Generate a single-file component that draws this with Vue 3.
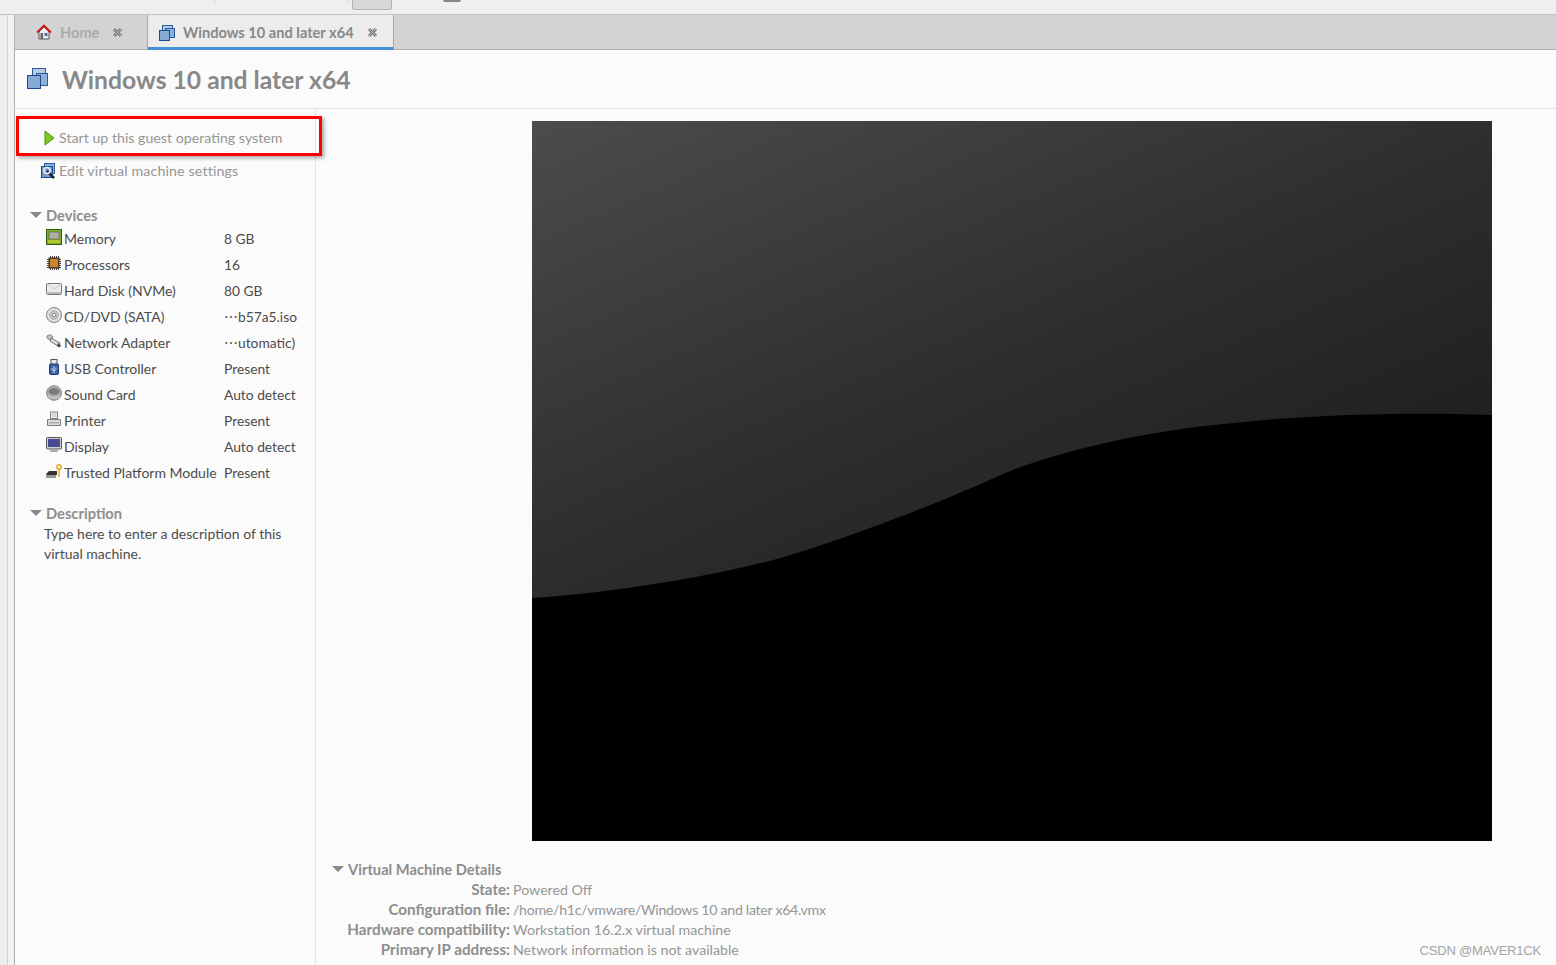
<script setup>
const devices = [
  { icon: 'memory', name: 'Memory', value: '8 GB' },
  { icon: 'cpu', name: 'Processors', value: '16' },
  { icon: 'disk', name: 'Hard Disk (NVMe)', value: '80 GB' },
  { icon: 'cd', name: 'CD/DVD (SATA)', value: '⋯b57a5.iso' },
  { icon: 'net', name: 'Network Adapter', value: '⋯utomatic)' },
  { icon: 'usb', name: 'USB Controller', value: 'Present' },
  { icon: 'sound', name: 'Sound Card', value: 'Auto detect' },
  { icon: 'printer', name: 'Printer', value: 'Present' },
  { icon: 'display', name: 'Display', value: 'Auto detect' },
  { icon: 'tpm', name: 'Trusted Platform Module', value: 'Present' }
]

const details = [
  { label: 'State:', value: 'Powered Off' },
  { label: 'Configuration file:', value: '/home/h1c/vmware/Windows 10 and later x64.vmx', tight: true },
  { label: 'Hardware compatibility:', value: 'Workstation 16.2.x virtual machine' },
  { label: 'Primary IP address:', value: 'Network information is not available' }
]
</script>

<template>
  <div class="page">
    <div class="topbar">
      <i class="tick first"></i>
      <i class="tick second"></i>
      <span class="topbtn"></span>
      <i class="topmark"></i>
    </div>
    <div class="main">
      <div class="rail"></div>
      <div class="workspace">
        <div class="tabs">
          <div class="tab home">
            <svg class="tabicon" viewBox="0 0 16 16">
              <path d="M3 8v7h10V8L8 3z" fill="#ececec" stroke="#555" stroke-width="1" />
              <rect x="4.500" y="9" width="2.500" height="6" fill="#666" />
              <rect x="8.500" y="9" width="3" height="3" fill="#5a70a0" />
              <path d="M1 8.500L8 1.500l7 7" fill="none" stroke="#d01818" stroke-width="1.800" />
            </svg>
            <span class="tabtext">Home</span>
            <svg class="close" viewBox="0 0 11 11">
              <path d="M2 2l7 7M9 2l-7 7" stroke="#777" stroke-width="3" />
              <path d="M2 2l7 7M9 2l-7 7" stroke="#bbb" stroke-width="1" />
            </svg>
          </div>
          <div class="tab active">
            <svg class="tabicon" viewBox="0 0 16 16">
              <rect x="3.500" y="0.500" width="10" height="10" fill="#b4cbe8" stroke="#2c5a9c" />
              <rect x="6.500" y="3.500" width="9" height="9" fill="#8db0dc" stroke="#2c5a9c" />
              <rect x="0.500" y="5.500" width="10" height="10" fill="#86a9d6" stroke="#1f4a8c" />
            </svg>
            <span class="tabtext">Windows 10 and later x64</span>
            <svg class="close" viewBox="0 0 11 11">
              <path d="M2 2l7 7M9 2l-7 7" stroke="#777" stroke-width="3" />
              <path d="M2 2l7 7M9 2l-7 7" stroke="#bbb" stroke-width="1" />
            </svg>
          </div>
        </div>

        <header class="title">
          <svg class="titleicon" viewBox="0 0 22 22">
            <rect x="5.500" y="0.500" width="13" height="13" fill="#b4cbe8" stroke="#2c5a9c" />
            <rect x="9.500" y="5.500" width="11" height="12" fill="#8db0dc" stroke="#2c5a9c" />
            <rect x="0.500" y="7.500" width="13" height="13" fill="#86a9d6" stroke="#1f4a8c" />
          </svg>
          <h1>Windows 10 and later x64</h1>
        </header>

        <div class="body">
          <aside class="sidebar">
            <div class="action start">
              <svg class="play" viewBox="0 0 11 16">
                <path d="M1 1l9 7-9 7z" fill="#7ccb20" stroke="#4b8f12" stroke-width="1" />
              </svg>
              <span>Start up this guest operating system</span>
            </div>
            <div class="highlight"></div>
            <div class="action edit">
              <svg class="editicon" viewBox="0 0 16 16">
                <rect x="3.500" y="0.500" width="10" height="10" fill="#8db0dc" stroke="#2c5a9c" />
                <rect x="0.500" y="3.500" width="11" height="11" fill="#6f9ad0" stroke="#1f4a8c" />
                <path d="M6 8l7 7" stroke="#222" stroke-width="2.500" />
                <circle cx="6" cy="7.500" r="3" fill="none" stroke="#eee" stroke-width="1.600" />
              </svg>
              <span>Edit virtual machine settings</span>
            </div>

            <div class="section devices">
              <i class="caret"></i>Devices
            </div>
            <ul class="devlist">
              <li v-for="d in devices" :key="d.name">
                <svg class="devicon" viewBox="0 0 16 16">
                  <template v-if="d.icon === 'memory'">
                    <rect x="0.500" y="0.500" width="15" height="15" fill="#7fb02a" stroke="#2f5c0e" />
                    <rect x="3" y="3" width="10" height="7" fill="#b0b0a4" stroke="#555" stroke-width="0.600" />
                    <path d="M3 11v3M5 11v3M7 11v3M9 11v3M11 11v3M13 11v3" stroke="#efd83a" />
                  </template>
                  <template v-else-if="d.icon === 'cpu'">
                    <path d="M1 4.500h14M1 6.500h14M1 8.500h14M1 10.500h14M1 12.500h14" stroke="#444" />
                    <path d="M4.500 1v14M6.500 1v14M8.500 1v14M10.500 1v14M12.500 1v14" stroke="#444" />
                    <rect x="2.500" y="2.500" width="11" height="11" fill="#4a3a20" />
                    <rect x="4" y="4" width="8" height="8" fill="#c9842c" />
                  </template>
                  <template v-else-if="d.icon === 'disk'">
                    <rect x="0.500" y="2.500" width="15" height="11" rx="1" fill="#ececec" stroke="#777" />
                    <path d="M1 3l7 5 7-5" fill="none" stroke="#ccc" />
                    <rect x="1.500" y="11" width="13" height="2" fill="#b8b8b8" />
                  </template>
                  <template v-else-if="d.icon === 'cd'">
                    <circle cx="8" cy="8" r="7.500" fill="#e2e2e2" stroke="#808080" />
                    <circle cx="8" cy="8" r="4.200" fill="#c8c8c8" stroke="#a8a8a8" />
                    <circle cx="8" cy="8" r="1.800" fill="#f4f4f4" stroke="#777" stroke-width="0.800" />
                  </template>
                  <template v-else-if="d.icon === 'net'">
                    <path d="M1 3c2-2 5-1 6 1L5 7C3 7 0 5 1 3z" fill="#c4c4c4" stroke="#666" stroke-width="0.800" />
                    <path d="M5 5l9 5-2 3-8-5z" fill="#e0e0e0" stroke="#555" stroke-width="0.800" />
                    <path d="M12 10l3 2.500-1.500 2L11 13z" fill="#444" />
                  </template>
                  <template v-else-if="d.icon === 'usb'">
                    <rect x="5" y="0.500" width="6" height="5" fill="#e8e8e8" stroke="#555" />
                    <rect x="3.500" y="5" width="9" height="10.500" rx="1" fill="#3a64a4" stroke="#1c3a70" />
                    <path d="M8 7v7M6 9v2l2 1M10 8.500v2l-2 1" fill="none" stroke="#cfe0f4" stroke-width="0.900" />
                  </template>
                  <template v-else-if="d.icon === 'sound'">
                    <ellipse cx="8" cy="8" rx="7.500" ry="7.300" fill="#b0b0b0" stroke="#8a8a8a" />
                    <ellipse cx="8" cy="6.500" rx="5.500" ry="3.500" fill="#7a7a7a" />
                    <path d="M2 11c3 2.500 9 2.500 12 0" fill="none" stroke="#d8d8d8" />
                  </template>
                  <template v-else-if="d.icon === 'printer'">
                    <rect x="4.500" y="1" width="7" height="6.500" fill="#f4f4f4" stroke="#808080" />
                    <path d="M1.500 8.500h13v6h-13z" fill="#dcdcdc" stroke="#808080" />
                    <path d="M5.500 3h5M5.500 5h5" stroke="#aaa" stroke-width="0.800" />
                    <rect x="3" y="11" width="10" height="1.500" fill="#aaa" />
                  </template>
                  <template v-else-if="d.icon === 'display'">
                    <rect x="0.500" y="0.500" width="15" height="11.500" rx="1" fill="#d0d0d0" stroke="#555" />
                    <rect x="2" y="2" width="12" height="8" fill="#4a4a90" />
                    <path d="M4 15h8l-1-3H5z" fill="#a8a8a8" />
                  </template>
                  <template v-else>
                    <path d="M0 11l3-3h8v4H1z" fill="#333" />
                    <path d="M1 12v3M3 12v3M5 12v3M7 12v3M9 12v3" stroke="#333" />
                    <circle cx="13" cy="4" r="2.200" fill="none" stroke="#e0a820" stroke-width="1.500" />
                    <path d="M13 6v8" stroke="#e0a820" stroke-width="1.500" />
                  </template>
                </svg>
                <span class="devname">{{ d.name }}</span>
                <span class="devval">{{ d.value }}</span>
              </li>
            </ul>

            <div class="section descr">
              <i class="caret"></i>Description
            </div>
            <p class="desctext">Type here to enter a description of this virtual machine.</p>
          </aside>

          <main class="content">
            <div class="preview">
              <svg viewBox="0 0 960 720" width="960" height="720">
                <defs>
                  <linearGradient id="shine" gradientUnits="userSpaceOnUse" x1="0" y1="0" x2="325" y2="738">
                    <stop offset="0" stop-color="#4c4c4c" />
                    <stop offset="0.5" stop-color="#2e2e2e" />
                    <stop offset="1" stop-color="#181818" />
                  </linearGradient>
                </defs>
                <rect width="960" height="720" fill="#000" />
                <path d="M0 0H960V294C850 290 750 296 683 304C620 310 520 330 462 357C400 385 300 423 241 439C170 458 60 474 0 477Z" fill="url(#shine)" />
              </svg>
            </div>
            <section class="details">
              <div class="section vmhead">
                <i class="caret"></i>Virtual Machine Details
              </div>
              <dl class="vminfo">
                <template v-for="r in details" :key="r.label">
                  <dt>{{ r.label }}</dt>
                  <dd :class="{ tight: r.tight }">{{ r.value }}</dd>
                </template>
              </dl>
            </section>
          </main>
        </div>
      </div>
    </div>
    <span class="watermark">CSDN @MAVER1CK</span>
  </div>
</template>

<style>
html, body {
  margin: 0;
  background: #fbfbfb;
}
</style>

<style scoped>
.page {
  position: relative;
  width: 1556px;
  height: 965px;
  overflow: hidden;
  display: flex;
  flex-direction: column;
  font-family: Lato, "Noto Sans", sans-serif;
  font-size: 14.2px;
  color: #4c4c4c;
  background: #fbfbfb;
}

.topbar {
  position: relative;
  height: 14px;
  flex: none;
  background: #efefef;
  border-bottom: 1px solid #c4c4c4;
  padding-left: 352px;
}
.tick {
  position: absolute;
  top: 0;
  width: 1px;
  height: 4px;
  background: #d8d8d8;
}
.tick.first {
  left: 214px;
}
.tick.second {
  left: 347px;
}
.topmark {
  position: absolute;
  left: 443px;
  top: 0;
  width: 18px;
  height: 2px;
  background: #888;
  border-radius: 0 0 3px 3px;
}
.topbtn {
  display: block;
  width: 38px;
  height: 9px;
  background: #d8d8d8;
  border: 1px solid #b4b4b4;
  border-top: 0;
  border-radius: 0 0 3px 3px;
}

.main {
  flex: 1;
  display: flex;
  min-height: 0;
}
.rail {
  width: 14px;
  flex: none;
  background: linear-gradient(90deg, #ededed 7px, #d2d2d2 7px, #d2d2d2 8px, #f2f2f2 8px);
  border-right: 1px solid #b0b0b0;
}
.workspace {
  flex: 1;
  display: flex;
  flex-direction: column;
  min-width: 0;
}

.tabs {
  display: flex;
  height: 35px;
  flex: none;
  background: #d3d3d3;
  box-sizing: border-box;
  border-bottom: 1px solid #b0b0b0;
}
.tab {
  display: flex;
  align-items: center;
  box-sizing: border-box;
  height: 35px;
  font-size: 14.6px;
  font-weight: 700;
  color: #888;
  border-right: 1px solid #a8a8a8;
}
.tab.home {
  width: 133px;
  padding: 0 0 1px 21px;
  color: #aaa;
}
.tab.active {
  width: 246px;
  padding: 3px 0 0 11px;
  background: #ececec;
  border-bottom: 3px solid #4a90d9;
}
.tabicon {
  width: 16px;
  height: 16px;
  margin-right: 8px;
}
.tabtext {
  margin-right: 13px;
}
.close {
  width: 11px;
  height: 11px;
}

.title {
  height: 59px;
  flex: none;
  box-sizing: border-box;
  display: flex;
  align-items: center;
  padding-left: 12px;
  border-bottom: 1px solid #e4e4e4;
}
.titleicon {
  width: 22px;
  height: 22px;
  margin-right: 13px;
}
.title h1 {
  margin: 0;
  font-size: 24.7px;
  font-weight: 700;
  color: #888;
}

.body {
  flex: 1;
  display: flex;
  min-height: 0;
}
.sidebar {
  position: relative;
  width: 301px;
  flex: none;
  box-sizing: border-box;
  border-right: 1px solid #e4e4e4;
}
.action {
  display: flex;
  align-items: center;
  height: 33px;
  color: #969696;
}
.start {
  margin-top: 12px;
  padding-left: 29px;
}
.edit {
  padding-left: 26px;
  letter-spacing: 0.15px;
}
.play {
  width: 11px;
  height: 16px;
  margin-right: 4px;
}
.editicon {
  width: 16px;
  height: 16px;
  margin-right: 2px;
}
.highlight {
  position: absolute;
  left: 1px;
  top: 7px;
  width: 300px;
  height: 34px;
  border: 3px solid #f00;
  box-shadow: 2px 2px 4px rgba(0, 0, 0, 0.35);
}

.section {
  font-size: 14.7px;
  font-weight: 700;
  color: #8e8e8e;
  display: flex;
  align-items: center;
}
.caret {
  width: 0;
  height: 0;
  border-left: 6px solid transparent;
  border-right: 6px solid transparent;
  border-top: 6px solid #888;
  margin-right: 4px;
}
.devices {
  margin-top: 17px;
  padding-left: 15px;
  height: 21px;
}
.devlist {
  list-style: none;
  margin: 0;
  padding: 0 0 0 31px;
  font-size: 14px;
}
.devlist li {
  display: flex;
  align-items: center;
  height: 26px;
}
.devicon {
  width: 16px;
  height: 16px;
  flex: none;
  margin-right: 2px;
  margin-top: -2px;
}
.devname {
  width: 160px;
  flex: none;
  white-space: nowrap;
}
.devval {
  font-size: 13.8px;
}
.descr {
  margin-top: 17px;
  padding-left: 15px;
  height: 22px;
}
.desctext {
  margin: 0;
  padding-left: 29px;
  width: 245px;
  font-size: 14px;
  line-height: 20px;
}

.content {
  flex: 1;
  min-width: 0;
  display: flex;
  flex-direction: column;
  padding-left: 16px;
}
.preview {
  margin: 12px 0 0 200px;
  height: 720px;
}
.preview svg {
  display: block;
}
.details {
  margin-top: 17px;
}
.vmhead {
  height: 21px;
}
.vminfo {
  display: grid;
  grid-template-columns: 178px 1fr;
  column-gap: 3px;
  margin: 0;
  line-height: 20px;
  color: #969696;
}
.vminfo dt {
  text-align: right;
  font-size: 15.2px;
  font-weight: 700;
  color: #8e8e8e;
}
.vminfo dd {
  margin: 0;
  height: 20px;
  padding-top: 1px;
  box-sizing: border-box;
}
.vminfo dd.tight {
  letter-spacing: -0.3px;
}

.watermark {
  position: absolute;
  right: 15px;
  bottom: 7px;
  font-family: "Liberation Sans", sans-serif;
  font-size: 13px;
  letter-spacing: -0.2px;
  color: #a4a4a4;
}
</style>
